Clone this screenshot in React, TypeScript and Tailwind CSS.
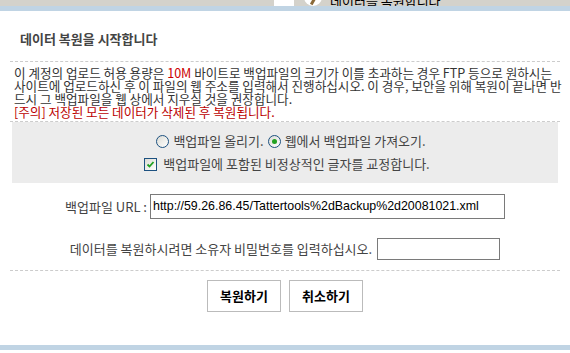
import React from 'react';

const kr = { fontFamily: '"Noto Sans CJK KR", "Noto Sans", sans-serif' };

function Radio({ checked }: { checked?: boolean }) {
  return (
    <span className="inline-flex w-[13px] h-[13px] rounded-full border border-[#1c5180] bg-gradient-to-br from-[#dcdcd5] to-white items-center justify-center shrink-0">
      {checked && <span className="w-[5px] h-[5px] rounded-full bg-[#21a121]" />}
    </span>
  );
}

function CheckBox() {
  return (
    <span className="inline-flex w-[13px] h-[13px] border border-[#1c5180] bg-gradient-to-br from-[#dcdcd5] to-white items-center justify-center shrink-0">
      <svg width="9" height="9" viewBox="0 0 9 9">
        <path d="M1.5 4.5 L3.5 6.5 L7.5 2" stroke="#21a121" strokeWidth="1.8" fill="none" />
      </svg>
    </span>
  );
}

export default function App() {
  return (
    <div className="w-[570px] h-[353px] bg-white text-[12px] text-[#333] overflow-hidden" style={kr}>
      {/* top tab strip, mostly scrolled out */}
      <div className="h-[6px] bg-[#d4d2cb] flex items-end overflow-hidden pl-[274px]">
        <div className="w-[20px] h-[18px] bg-white shrink-0" />
        <div className="ml-[10px] w-[18px] h-[18px] rounded-full bg-white flex items-center justify-center shrink-0">
          <span className="block w-[3px] h-[9px] bg-[#8a6a3a] rotate-[30deg] translate-y-[3px]" />
        </div>
        <span className="ml-[8px] text-[13px] leading-[17px] text-black whitespace-nowrap translate-y-[3px]">데이터를 복원합니다</span>
      </div>
      <div className="h-[5px] bg-[#c0d4e4]" />

      <div className="px-[10px]">
        <div className="pt-[20px] pl-[10px] h-[50px] text-[13px] leading-[16px] font-bold text-[#444]">
          데이터 복원을 시작합니다
        </div>
        <div className="border-t border-dashed border-[#cccccc]" />

        <div className="px-[4px] pt-[4px] text-[12.6px] leading-[13px] text-[#333] whitespace-nowrap">
          <div>
            이 계정의 업로드 허용 용량은 <span className="text-[#cc0000]">10M</span> 바이트로 백업파일의 크기가 이를 초과하는 경우 FTP 등으로 원하시는
          </div>
          <div>사이트에 업로드하신 후 이 파일의 웹 주소를 입력해서 진행하십시오. 이 경우, 보안을 위해 복원이 끝나면 반</div>
          <div>드시 그 백업파일을 웹 상에서 지우실 것을 권장합니다.</div>
          <div className="text-[#bb0000]">[주의] 저장된 모든 데이터가 삭제된 후 복원됩니다.</div>
        </div>

        <div className="mt-[3px] border-t border-dashed border-[#cccccc]" />

        <div className="mx-[2px] bg-[#ececec] pt-[9px] pb-[9px] text-[13px] text-[#444]">
          <div className="h-[20px] flex items-center justify-center gap-[4px] ml-[12px]">
            <Radio />
            <span>백업파일 올리기.</span>
            <Radio checked />
            <span>웹에서 백업파일 가져오기.</span>
          </div>
          <div className="mt-[3px] h-[20px] flex items-center justify-center gap-[6px] ml-[4px]">
            <CheckBox />
            <span>백업파일에 포함된 비정상적인 글자를 교정합니다.</span>
          </div>
        </div>

        <div className="mt-[11px] flex items-center justify-center gap-[3px] text-[13px] text-[#444]">
          <span>백업파일 URL :</span>
          <div className="w-[355px] h-[25px] border border-[#7a7a7a] flex items-center px-[2px] text-[12.4px] text-black" style={{ fontFamily: '"Liberation Sans", Arial, sans-serif' }}>
            http://59.26.86.45/Tattertools%2dBackup%2d20081021.xml
          </div>
        </div>

        <div className="mt-[19px] flex items-center justify-center gap-[5px] text-[13px] text-[#444]">
          <span>데이터를 복원하시려면 소유자 비밀번호를 입력하십시오.</span>
          <div className="w-[123px] h-[22px] border border-[#7a7a7a]" />
        </div>

        <div className="mt-[10px] border-t border-dashed border-[#cccccc]" />

        <div className="mt-[9px] flex justify-center gap-[8px]">
          <button className="w-[74px] h-[32px] border border-[#bbbbbb] bg-white text-[13px] font-bold text-black">복원하기</button>
          <button className="w-[74px] h-[32px] border border-[#bbbbbb] bg-white text-[13px] font-bold text-black">취소하기</button>
        </div>
      </div>

      <div className="mt-[33px] h-[5px] bg-[#c0d4e4]" />
    </div>
  );
}
